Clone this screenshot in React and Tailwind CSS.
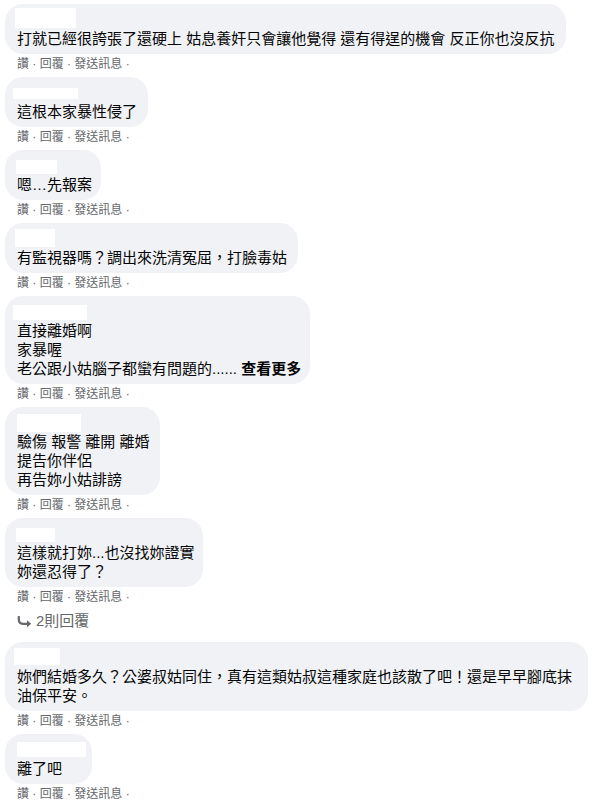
import React from "react";

const comments = [
  {
    lines: ["打就已經很誇張了還硬上 姑息養奸只會讓他覺得 還有得逞的機會 反正你也沒反抗"],
    w: "w-[561px]",
    mask: "mt-[0px] h-[20px] w-[61px] -ml-[2px]",
  },
  { lines: ["這根本家暴性侵了"], w: "w-[143px]", mask: "mt-[7px] h-[11px] w-[65px] -ml-[4px]" },
  { lines: ["嗯…先報案"], w: "w-[96px]", mask: "mt-[6px] h-[14px] w-[41px] -ml-[1px]" },
  {
    lines: ["有監視器嗎？調出來洗清冤屈，打臉毒姑"],
    w: "w-[293px]",
    mask: "mt-[2px] h-[18px] w-[40px] -ml-[2px]",
  },
  {
    lines: ["直接離婚啊", "家暴喔", "老公跟小姑腦子都蠻有問題的......"],
    more: true,
    w: "w-[305px]",
    mask: "mt-[5px] h-[15px] w-[74px] -ml-[4px]",
  },
  {
    lines: ["驗傷 報警 離開 離婚", "提告你伴侶", "再告妳小姑誹謗"],
    w: "w-[155px]",
    mask: "mt-[3px] h-[18px] w-[64px] ml-0",
  },
  {
    lines: ["這樣就打妳...也沒找妳證實", "妳還忍得了？"],
    w: "w-[198px]",
    mask: "mt-[6px] h-[14px] w-[39px] -ml-[1px]",
    replies: "2則回覆",
  },
  {
    lines: ["妳們結婚多久？公婆叔姑同住，真有這類姑叔這種家庭也該散了吧！還是早早腳底抹", "油保平安。"],
    w: "w-[583px]",
    mask: "mt-[2px] h-[17px] w-[46px] -ml-[3px]",
  },
  { lines: ["離了吧"], w: "w-[87px]", mask: "mt-[4px] h-[15px] w-[69px] ml-0" },
];

function ReplyArrow() {
  return (
    <svg width="15" height="11" viewBox="0 0 15 11" fill="none" className="shrink-0">
      <path d="M1.8 1v2.6c0 2.6 1.6 4.2 4.2 4.2h5" stroke="#65676b" strokeWidth="2.2" strokeLinecap="round" />
      <path d="M10 4.2l4.2 3.6L10 11.2z" fill="#65676b" />
    </svg>
  );
}

function Comment({ c }) {
  return (
    <div className="flex flex-col items-start">
      <div className={`ml-[5px] ${c.w} rounded-[18px] bg-[#f0f2f5] pl-[12px] pr-[12px] pt-[4px] pb-[6px]`}>
        <div className="flex h-[21px] items-start">
          <div className={`shrink-0 bg-white ${c.mask}`} />
        </div>
        <div className="text-[15px] leading-[19px] text-[#050505]">
          {c.lines.map((l, i) => (
            <div key={i} className="h-[19px] whitespace-nowrap">
              {l}
              {c.more && i === c.lines.length - 1 && (
                <span className="font-semibold"> 查看更多</span>
              )}
            </div>
          ))}
        </div>
      </div>
      <div className="h-[23px] pl-[17px] pt-[2px] text-[12px] leading-[16px] text-[#65676b]">
        讚 · 回覆 · 發送訊息 ·
      </div>
      {c.replies && (
        <div className="flex h-[22px] items-center gap-[4px] pl-[17px] mb-[10px] text-[15px] text-[#65676b]">
          <ReplyArrow />
          <span>{c.replies}</span>
        </div>
      )}
    </div>
  );
}

export default function App() {
  return (
    <div className="w-[593px] h-[803px] overflow-hidden bg-white pt-[4px] font-['Liberation_Sans','Noto_Sans_CJK_TC',sans-serif]">
      {comments.map((c, i) => (
        <Comment key={i} c={c} />
      ))}
    </div>
  );
}
